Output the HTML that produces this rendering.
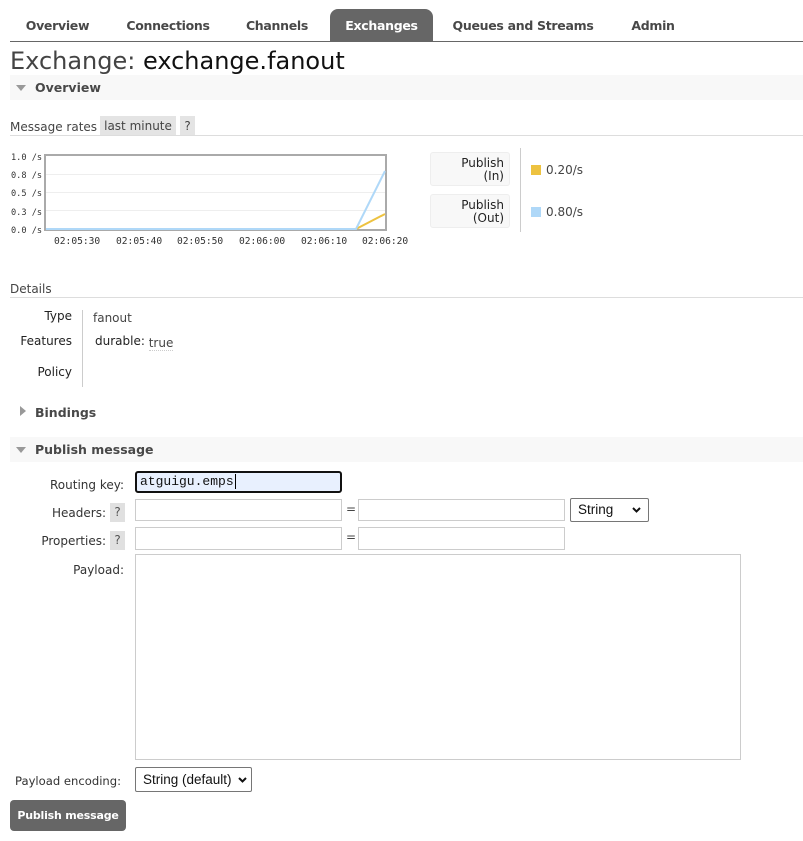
<!DOCTYPE html>
<html><head><meta charset="utf-8"><style>
*{margin:0;padding:0;box-sizing:border-box}
body{width:803px;height:841px;background:#fff;font-family:"DejaVu Sans",Verdana,sans-serif;font-size:12px;color:#444;position:relative;overflow:hidden}
.a{position:absolute;white-space:nowrap}
.tab{position:absolute;top:9px;height:32px;line-height:33px;font-weight:bold;font-size:12.5px;color:#484848;text-align:center;letter-spacing:-0.3px}
.sec{position:absolute;left:10px;width:793px;background:#f8f8f8;font-weight:bold;font-size:12.5px;color:#484848}
.tri{position:absolute;width:0;height:0;border-left:5px solid transparent;border-right:5px solid transparent;border-top:6px solid #999}
.inp{position:absolute;border:1px solid #ccc;background:#fff}
.lbl{position:absolute;right:679px;text-align:right;white-space:nowrap;color:#333}
.q{position:absolute;width:15px;height:19px;background:#e0e0e0;text-align:center;line-height:19px;color:#555}
.sel{position:absolute;border:1px solid #767676;border-radius:2px;background:#fff;color:#111;padding-left:7px;font-family:"Liberation Sans",sans-serif;font-size:13.5px}
.sel svg{position:absolute;right:7px;top:50%;margin-top:-3px}
</style></head><body>
<div class="tab" style="left:10px;width:95px">Overview</div>
<div class="tab" style="left:112px;width:112px">Connections</div>
<div class="tab" style="left:232px;width:90px">Channels</div>
<div class="tab" style="left:330px;width:103px;background:#666;color:#fff;border-radius:8px 8px 0 0">Exchanges</div>
<div class="tab" style="left:443px;width:160px">Queues and Streams</div>
<div class="tab" style="left:615px;width:76px">Admin</div>
<div class="a" style="left:10px;top:41px;width:793px;height:1px;background:#666"></div>
<div class="a" style="left:10px;top:45px;font-size:24px;line-height:32px;color:#444">Exchange: <span style="color:#111">exchange.fanout</span></div>
<div class="sec" style="top:75px;height:25px;line-height:25px"><div class="tri" style="left:6px;top:10px"></div><span style="position:absolute;left:25px">Overview</span></div>
<div class="a" style="left:10px;top:118px;line-height:18px">Message rates</div>
<div class="a" style="left:100px;top:116px;width:76px;height:19px;background:#e4e4e4;line-height:20px;text-align:center">last minute</div>
<div class="a" style="left:180px;top:116px;width:15px;height:19px;background:#e4e4e4;line-height:20px;text-align:center">?</div>
<div class="a" style="left:10px;top:135px;width:793px;height:1px;background:#ddd"></div>
<svg class="a" style="left:0;top:145px" width="420" height="105" font-family="DejaVu Sans Mono,monospace" fill="#333">
<g font-size="8.6"><text x="11" y="15">1.0 /s</text><text x="11" y="33">0.8 /s</text><text x="11" y="51">0.5 /s</text><text x="11" y="70">0.3 /s</text><text x="11" y="88">0.0 /s</text></g>
<g stroke="#eee"><line x1="46" y1="29.5" x2="386" y2="29.5"/><line x1="46" y1="47.5" x2="386" y2="47.5"/><line x1="46" y1="65.5" x2="386" y2="65.5"/></g>
<rect x="45" y="10" width="341" height="75" fill="none" stroke="#aaa" stroke-width="2"/>
<polyline points="46,84 356,84 385,69" fill="none" stroke="#edc240" stroke-width="2"/>
<polyline points="46,84 356,84 385,26" fill="none" stroke="#afd8f8" stroke-width="2"/>
<g font-size="9.6"><text x="54" y="99">02:05:30</text><text x="116" y="99">02:05:40</text><text x="177" y="99">02:05:50</text><text x="239" y="99">02:06:00</text><text x="301" y="99">02:06:10</text><text x="362" y="99">02:06:20</text></g>
</svg>
<div class="a" style="left:430px;top:152px;width:80px;height:34px;background:#f8f8f8;border:1px solid #eee;border-radius:3px;text-align:right;padding-right:5px;line-height:13px;padding-top:4px;color:#222">Publish<br>(In)</div>
<div class="a" style="left:430px;top:194px;width:80px;height:34px;background:#f8f8f8;border:1px solid #eee;border-radius:3px;text-align:right;padding-right:5px;line-height:13px;padding-top:4px;color:#222">Publish<br>(Out)</div>
<div class="a" style="left:520px;top:148px;width:1px;height:84px;background:#ccc"></div>
<div class="a" style="left:531px;top:165px;width:10px;height:10px;background:#edc240"></div>
<div class="a" style="left:546px;top:162px;line-height:16px">0.20/s</div>
<div class="a" style="left:531px;top:207px;width:10px;height:10px;background:#afd8f8"></div>
<div class="a" style="left:546px;top:204px;line-height:16px">0.80/s</div>
<div class="a" style="left:10px;top:281px;line-height:16px">Details</div>
<div class="a" style="left:10px;top:297px;width:793px;height:1px;background:#ddd"></div>
<div class="a" style="left:0;width:72px;text-align:right;top:309px;color:#222">Type</div>
<div class="a" style="left:0;width:72px;text-align:right;top:334px;color:#222">Features</div>
<div class="a" style="left:0;width:72px;text-align:right;top:365px;color:#222">Policy</div>
<div class="a" style="left:82px;top:310px;width:1px;height:77px;background:#ccc"></div>
<div class="a" style="left:93px;top:311px">fanout</div>
<div class="a" style="left:95px;top:334px;color:#222">durable: <span style="color:#444;border-bottom:1px dotted #ccc;position:relative;top:2px">true</span></div>
<div class="a" style="left:20px;top:406px;width:0;height:0;border-top:5px solid transparent;border-bottom:5px solid transparent;border-left:6px solid #999"></div>
<div class="a" style="left:35px;top:405px;font-weight:bold;font-size:12.5px;color:#484848">Bindings</div>
<div class="sec" style="top:437px;height:25px;line-height:26px"><div class="tri" style="left:6px;top:10px"></div><span style="position:absolute;left:25px">Publish message</span></div>
<div class="lbl" style="top:478px">Routing key:</div>
<div class="a" style="left:135px;top:471px;width:207px;height:22px;border:2px solid #111;border-radius:3px;background:#e8f0fe;font-family:'Liberation Mono',monospace;font-size:13px;line-height:18px;padding-left:3px;color:#111">atguigu.emps<span style="border-left:1px solid #000;margin-left:1px"></span></div>
<div class="lbl" style="top:506px;right:697px">Headers:</div><div class="q" style="left:110px;top:503px">?</div>
<div class="inp" style="left:135px;top:499px;width:207px;height:22px"></div>
<div class="a" style="left:346px;top:502px">=</div>
<div class="inp" style="left:358px;top:499px;width:207px;height:22px"></div>
<div class="sel" style="left:570px;top:498px;width:79px;height:24px;line-height:22px">String<svg width="9" height="6" viewBox="0 0 9 6"><path d="M1 1l3.5 3.5L8 1" fill="none" stroke="#111" stroke-width="2"/></svg></div>
<div class="lbl" style="top:534px;right:697px">Properties:</div><div class="q" style="left:110px;top:531px">?</div>
<div class="inp" style="left:135px;top:527px;width:207px;height:23px"></div>
<div class="a" style="left:346px;top:530px">=</div>
<div class="inp" style="left:358px;top:527px;width:207px;height:23px"></div>
<div class="lbl" style="top:563px">Payload:</div>
<div class="inp" style="left:135px;top:554px;width:606px;height:206px"></div>
<div class="a" style="left:15px;top:774px;color:#333;font-size:11.6px">Payload encoding:</div>
<div class="sel" style="left:135px;top:767px;width:117px;height:25px;line-height:23px">String (default)<svg width="9" height="6" viewBox="0 0 9 6" style="right:4px"><path d="M1 1l3.5 3.5L8 1" fill="none" stroke="#111" stroke-width="2"/></svg></div>
<div class="a" style="left:10px;top:800px;width:116px;height:31px;background:#666;border-radius:4px;color:#fff;font-weight:bold;text-align:center;line-height:31px;font-size:11px;letter-spacing:-0.2px">Publish message</div>
</body></html>
